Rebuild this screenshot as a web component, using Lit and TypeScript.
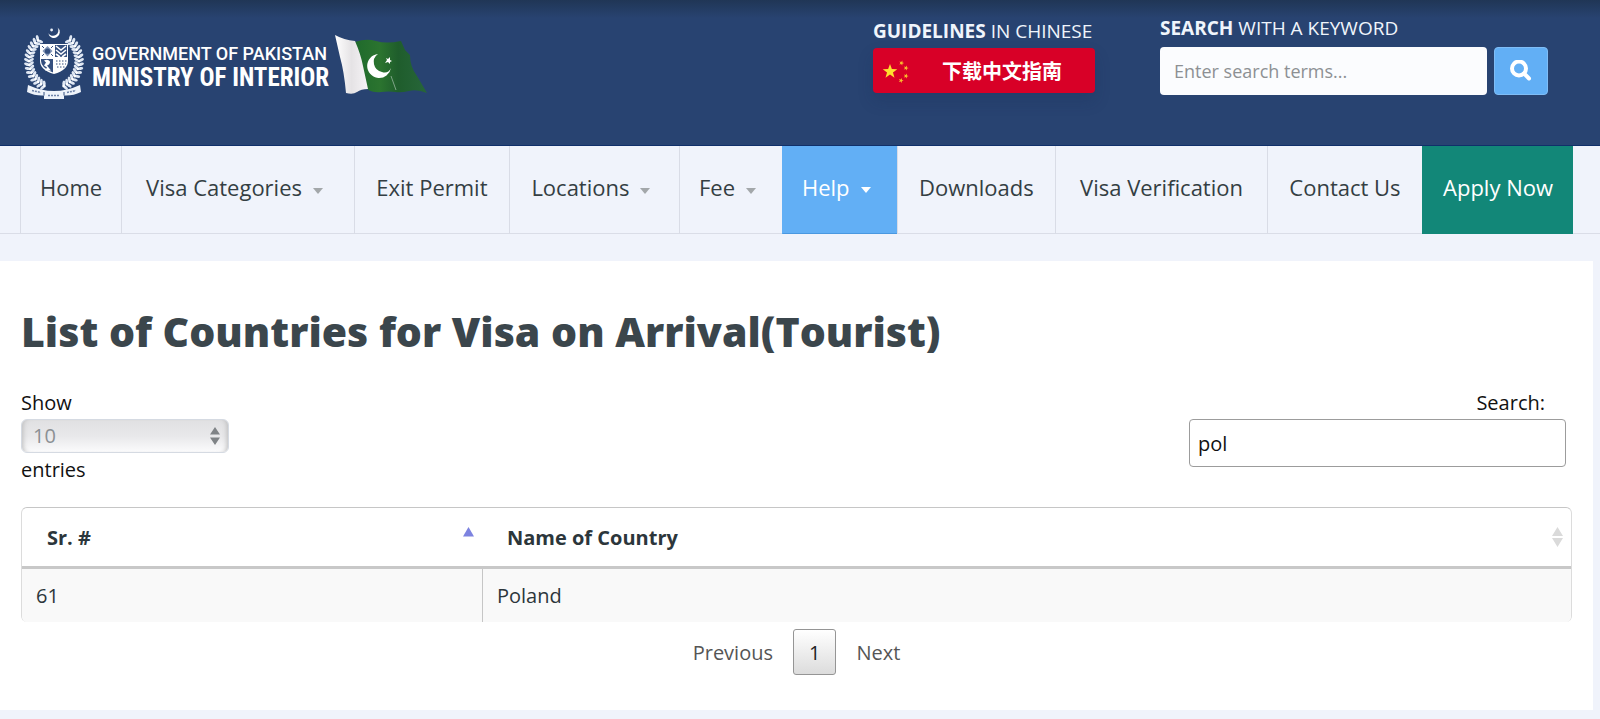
import { LitElement, html, css, svg, nothing } from "lit";
import { customElement, state } from "lit/decorators.js";

interface NavItem {
  label: string;
  menu?: boolean;
  kind?: "active" | "apply";
  grow: number;
}

const NAV: NavItem[] = [
  { label: "Home", grow: 0 },
  { label: "Visa Categories", menu: true, grow: 2 },
  { label: "Exit Permit", grow: 1 },
  { label: "Locations", menu: true, grow: 1 },
  { label: "Fee", menu: true, grow: 0 },
  { label: "Help", menu: true, kind: "active", grow: 0 },
  { label: "Downloads", grow: 1 },
  { label: "Visa Verification", grow: 2 },
  { label: "Contact Us", grow: 1 },
  { label: "Apply Now", kind: "apply", grow: 0 },
];

const COUNTRIES = [{ no: 61, name: "Poland" }];

/* Leaves of the wreath, laid along one side of an ellipse and mirrored. */
const leaves = (side: number) =>
  Array.from({ length: 15 }, (_, i) => {
    const a = ((-50 + i * 8.4) * Math.PI) / 180;
    const x = 31 + side * 25 * Math.cos(a);
    const y = 35 + 27 * Math.sin(a);
    const turn = side * (-50 + i * 8.4);
    return svg`<g transform="translate(${x} ${y}) rotate(${turn})">
      <ellipse cx="-2.6" cy="0" rx="2.9" ry="1.5" transform="rotate(28)" fill="#dfe7f3"></ellipse>
      <ellipse cx="2.6" cy="0" rx="2.9" ry="1.5" transform="rotate(-28)" fill="#dfe7f3"></ellipse>
      <circle r="1.3" fill="#fff"></circle>
    </g>`;
  });

const emblem = html`<svg class="emblem" viewBox="0 0 62 74" aria-hidden="true">
  <path d="M34.6 1.6a5.8 5.8 0 1 1-9.3 5.6a5.1 5.1 0 1 0 9.3-5.6z" fill="#fff"></path>
  <circle cx="28.6" cy="4" r="1.4" fill="#e9eff8"></circle>
  ${leaves(1)}${leaves(-1)}
  <path d="M17 18H45V35Q45 44 31 48Q17 44 17 35Z" fill="#fff"></path>
  <path d="M32 19H44V31H32Z" fill="#35507f"></path>
  <path d="M33 20l5 4 5-4M33 24l5 4 5-4M33 28l4 3M43 28l-4 3" fill="none" stroke="#fff" stroke-width="1.6"></path>
  <path d="M18 33H30V46.500Q18 42 18 35Z" fill="#35507f"></path>
  <path d="M21 34.500q4-2 6 1q0 3-3 4l4 5h-6l2-3-3-2 2-3z" fill="#fff"></path>
  <path d="M24.500 20l5 5-5 5.500-5-5.500z" fill="#8194b5"></path>
  <circle cx="24.500" cy="25.200" r="2.600" fill="#35507f"></circle>
  <path d="M19 20l2 2M30 20l-2 2M19 30l2-2M30 30l-2-2" stroke="#35507f" stroke-width="1"></path>
  <path d="M33 35h11M33 38h10M34 41h8" stroke="#35507f" stroke-width="1" stroke-dasharray="1.500 1.500"></path>
  <path d="M5 59Q18 65 31 65T57 59L58 66Q50 70 41 69.500V73H21V69.500Q12 70 4 66Z" fill="#eef3fa"></path>
  <path d="M9 64.500l9 2M44 66.500l9-2M25 69.500h12" stroke="#6e83a9" stroke-width="1.500" stroke-dasharray="2 1"></path>
  <path d="M21 66v3.500M41 66v3.500" stroke="#35507f" stroke-width="1"></path>
</svg>`;

const flag = html`<svg class="flag" viewBox="0 0 94 60" aria-hidden="true">
  <defs>
    <linearGradient id="cloth" x1="0" x2="1">
      <stop offset="0" stop-color="#1f6a2c"></stop>
      <stop offset=".35" stop-color="#2b742f"></stop>
      <stop offset=".6" stop-color="#1f5d2c"></stop>
      <stop offset="1" stop-color="#27663a"></stop>
    </linearGradient>
    <linearGradient id="hoist" x1="0" x2="1">
      <stop offset="0" stop-color="#fff"></stop>
      <stop offset=".5" stop-color="#e5e3e5"></stop>
      <stop offset="1" stop-color="#f6f4f6"></stop>
    </linearGradient>
  </defs>
  <path d="M20 7Q31 3 41 6T66 6L70 15L75 20Q75 32 82 41L92 58Q82 54 74 56T60 57T46 57T32 54Z" fill="url(#cloth)"></path>
  <path d="M0 0Q9 5 20 6Q26 20 28 31L33 54Q26 54 22 57T11 58Q9 36 5 22Z" fill="url(#hoist)"></path>
  <path d="M43 19A12 12 0 1 0 56 33Q53 39 47 37A10 10 0 0 1 43 19Z" fill="#fff"></path>
  <path d="M51 23l2 1 2-2 0 3 2 1-2 1 0 2-2-2-3 1 2-3z" fill="#fff"></path>
  <path d="M56 41l5 14" stroke="#7ea487" stroke-width="1"></path>
</svg>`;

const STAR = "M0-6.800L1.700-2.200L6.600-2.100L2.700.9L4.100 5.600L0 2.800L-4.100 5.600L-2.700.9L-6.600-2.100L-1.700-2.200Z";

const stars = html`<svg class="stars" viewBox="0 0 28 24" aria-hidden="true">
  <g fill="#ffde2e">
    <path d=${STAR} transform="translate(8 12.500) scale(1.100)"></path>
    ${[[19.5, 4], [24, 9], [24, 17], [19, 21.5]].map(
      ([x, y]) => svg`<path d=${STAR} opacity=".85" transform="translate(${x} ${y}) rotate(20) scale(.38)"></path>`
    )}
  </g>
</svg>`;

@customElement("app-root")
export class AppRoot extends LitElement {
  @state() private query = "pol";

  static styles = css`
    :host {
      display: block;
      min-height: 100vh;
      padding-bottom: 9px;
      box-sizing: border-box;
      background: #f0f3fb;
      color: #2c363b;
      font: 20px/33px "Open Sans", "Noto Sans", sans-serif;
    }
    *, *::before, *::after { box-sizing: border-box; }
    a { color: inherit; text-decoration: none; }
    input, select, button { font: inherit; margin: 0; }
    svg { display: block; }

    .top {
      display: flex;
      align-items: flex-start;
      height: 146px;
      padding: 0 52px 0 23px;
      color: #f0f5fc;
      background: linear-gradient(#203656, #284371 18px);
      border-bottom: 1px solid #10306a;
    }
    .brand { display: flex; align-items: flex-start; padding-top: 26px; margin-right: auto; }
    .emblem { width: 62px; height: 74px; }
    .flag { width: 94px; height: 60px; margin: 9px 0 0 6px; }
    .names {
      display: flex;
      flex-direction: column;
      padding: 17px 0 0 7px;
      color: #fff;
      white-space: nowrap;
    }
    .gov { font: 500 18px/22px Roboto, sans-serif; }
    .ministry { font: bold 25px/26px "Roboto Condensed", Roboto, sans-serif; }
    .caption { display: block; font-size: 19px; line-height: 28px; white-space: nowrap; }
    .guide { width: 222px; margin-right: 65px; padding-top: 17px; }
    .zh {
      display: flex;
      align-items: center;
      height: 45px;
      margin-top: 3px;
      border-radius: 4px;
      background: #d80027;
      color: #fff;
      box-shadow: 0 8px 16px rgba(20, 40, 80, .2);
    }
    .stars { width: 28px; height: 24px; margin: 0 32px 0 9px; }
    .zh span { font: bold 20px/30px "Noto Sans CJK SC", sans-serif; }
    .find { width: 388px; padding-top: 14px; }
    .row { display: flex; gap: 7px; margin-top: 5px; }
    .row input {
      flex: 1;
      min-width: 0;
      height: 48px;
      padding: 0 14px;
      border: 0;
      border-radius: 4px;
      background: #fbfcfe;
      font-size: 18px;
    }
    .row input::placeholder { color: #8d9093; opacity: 1; }
    .row button {
      display: grid;
      place-items: center;
      width: 54px;
      height: 48px;
      padding: 0;
      border: 1px solid #7fbdf6;
      border-radius: 4px;
      background: #62aff5;
    }

    .nav {
      display: flex;
      height: 88px;
      padding: 0 27px 0 20px;
      border-bottom: 1px solid #dadde7;
    }
    .nav a {
      display: flex;
      justify-content: center;
      height: 88px;
      padding: 0 19px;
      border-left: 1px solid #d9dce6;
      font-size: 22px;
      line-height: 82px;
      color: #343e43;
      white-space: nowrap;
    }
    .nav .grow1 { flex-grow: 1; }
    .nav .grow2 { flex-grow: 2; }
    .nav .menu { padding-right: 26px; }
    .nav .menu::after {
      content: "";
      align-self: center;
      margin: 1px 0 0 11px;
      border: 5px solid transparent;
      border-top: 6px solid #a3a7aa;
      border-bottom: 0;
    }
    .nav .active {
      background: #62aff5;
      border-left-color: #62aff5;
      border-bottom: 1px solid #4a98e0;
      color: #fff;
    }
    .nav .active::after { border-top-color: #fff; }
    .nav .apply { padding: 0 20px; background: #128778; border-left-color: #128778; color: #fff; }

    .card {
      margin: 27px 7px 0 0;
      padding: 42px 21px 35px;
      background: #fff;
    }
    h1 {
      margin: 0 0 27px;
      font-size: 41px;
      line-height: 56px;
      font-weight: 800;
      color: #3b464c;
    }
    .tools { display: flex; justify-content: space-between; color: #111; }
    .tools label { display: flex; flex-direction: column; }
    .pick { display: grid; width: 208px; height: 34px; }
    .pick select, .pick svg { grid-area: 1 / 1; }
    .pick svg { place-self: center end; margin-right: 9px; pointer-events: none; }
    select {
      appearance: none;
      padding: 0 11px;
      border: 1px solid #d5dae2;
      border-radius: 6px;
      background: linear-gradient(#e0e0e2, #e8e8ea 50%, #fbfbfc);
      box-shadow: inset 5px 0 5px -4px #bbb, inset -5px 0 5px -4px #bbb;
      color: #8b9094;
      line-height: 30px;
    }
    .filter { width: 377px; margin-right: 6px; }
    .filter span { align-self: flex-end; margin-right: 21px; }
    .filter input {
      height: 48px;
      padding: 0 8px;
      border: 1px solid #9c9c9c;
      border-radius: 4px;
      color: #111;
    }
    .frame {
      margin: 21px 0 7px;
      border: 1px solid #dcdcdc;
      border-top-color: #c6c6c6;
      border-bottom: 0;
      border-radius: 6px;
      overflow: hidden;
    }
    table { width: 100%; border-collapse: separate; border-spacing: 0; table-layout: fixed; }
    .num { width: 460px; }
    th { padding: 0; border-bottom: 3px solid #c8c8c8; text-align: left; }
    .sort {
      display: flex;
      align-items: center;
      justify-content: space-between;
      height: 58px;
      width: 100%;
      padding: 0 8px 0 25px;
      border: 0;
      background: none;
      color: #2c363b;
      font-weight: bold;
    }
    td { height: 53px; padding: 0 14px; background: #f9f9f9; }
    td + td { border-left: 1px solid #c6c6c6; }
    .pager { display: flex; justify-content: center; gap: 4px; }
    .pager button {
      height: 46px;
      padding: 0 15px;
      border: 1px solid transparent;
      border-radius: 3px;
      background: none;
      color: #555;
    }
    .pager .current {
      border-color: #959595;
      background: linear-gradient(#fff, #dcdcdc);
      color: #222;
    }
  `;

  private onFilter(e: Event) {
    this.query = (e.target as HTMLInputElement).value;
  }

  render() {
    const rows = COUNTRIES.filter((c) => c.name.toLowerCase().includes(this.query.toLowerCase()));
    return html`
      <header class="top">
        <a class="brand" href="#">
          ${emblem}
          <span class="names">
            <span class="gov">GOVERNMENT OF PAKISTAN</span>
            <span class="ministry">MINISTRY OF INTERIOR</span>
          </span>
          ${flag}
        </a>
        <div class="guide">
          <div class="caption"><b>GUIDELINES</b> IN CHINESE</div>
          <a class="zh" href="#" lang="zh-CN">${stars}<span>下载中文指南</span></a>
        </div>
        <form class="find" role="search" @submit=${(e: Event) => e.preventDefault()}>
          <label class="caption" for="keyword"><b>SEARCH</b> WITH A KEYWORD</label>
          <div class="row">
            <input id="keyword" type="text" placeholder="Enter search terms..." />
            <button type="submit" aria-label="Search">
              <svg width="22" height="22" viewBox="0 0 22 22" fill="none" stroke="#fff" stroke-linecap="round">
                <circle cx="9" cy="8.500" r="7" stroke-width="4"></circle>
                <path d="M14 13.500L19 18.500" stroke-width="4"></path>
              </svg>
            </button>
          </div>
        </form>
      </header>
      <nav class="nav">
        ${NAV.map(
          (n) => html`<a href="#" class="grow${n.grow} ${n.menu ? "menu" : ""} ${n.kind ?? ""}">${n.label}</a>`
        )}
      </nav>
      <main class="card">
        <h1>List of Countries for Visa on Arrival(Tourist)</h1>
        <div class="tools">
          <label>
            <span>Show</span>
            <span class="pick">
              <select><option>10</option><option>25</option><option>50</option><option>100</option></select>
              <svg width="10" height="18" viewBox="0 0 10 18" fill="#7f8386">
                <path d="M0 7.500L5 0L10 7.500ZM0 10.500H10L5 18Z"></path>
              </svg>
            </span>
            <span>entries</span>
          </label>
          <label class="filter">
            <span>Search:</span>
            <input type="text" .value=${this.query} @input=${this.onFilter} />
          </label>
        </div>
        <div class="frame">
          <table>
            <thead>
              <tr>
                <th class="num" aria-sort="ascending">
                  <button class="sort">Sr. #
                    <svg width="11" height="20" viewBox="0 0 11 20"><path d="M0 9.500L5.500 0L11 9.500Z" fill="#7d83e0"></path></svg>
                  </button>
                </th>
                <th>
                  <button class="sort">Name of Country
                    <svg width="11" height="20" viewBox="0 0 11 20"><path d="M0 9L5.500 0L11 9ZM0 11H11L5.500 20Z" fill="#dadada"></path></svg>
                  </button>
                </th>
              </tr>
            </thead>
            <tbody>
              ${rows.length
                ? rows.map((c) => html`<tr><td>${c.no}</td><td>${c.name}</td></tr>`)
                : nothing}
            </tbody>
          </table>
        </div>
        <div class="pager">
          <button>Previous</button><button class="current">1</button><button>Next</button>
        </div>
      </main>
    `;
  }
}
